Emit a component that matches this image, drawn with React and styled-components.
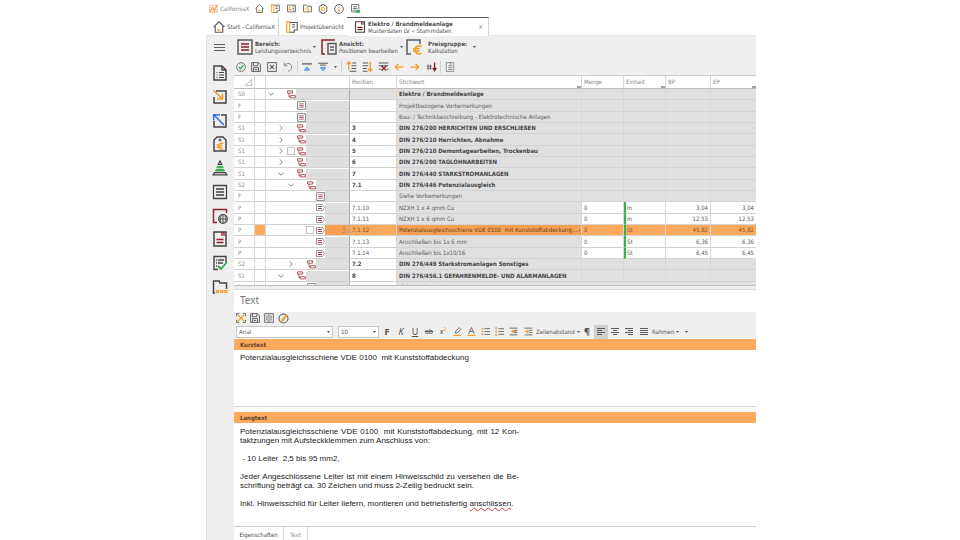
import React from "react";
import styled, { createGlobalStyle } from "styled-components";

const ORANGE = "#fea95b";
const ACCENT = "#f59a23";
const RED = "#8e1f2b";
const INK = "#5c5c5c";
const DARK = "#444";
const BAR = "#efefef";
const UI = '"DejaVu Sans Condensed", "DejaVu Sans", sans-serif';
const DOC = '"Liberation Sans", Arial, sans-serif';

const GlobalStyle = createGlobalStyle`
  *, *::before, *::after { box-sizing: border-box; }
  body { margin: 0; background: #fff; color: #4f4f4f; font: 6px/8px ${UI}; }
  button, select, textarea { font: inherit; color: inherit; margin: 0; padding: 0; border: 0; background: none; border-radius: 0; outline: none; }
  svg { display: block; flex: none; }
`;

/* ---------- layout ---------- */
const Page = styled.div`
  display: grid;
  grid-template-columns: minmax(0, 206fr) minmax(0, 550fr) minmax(0, 204fr);
  height: 100vh;
  overflow: hidden;
`;
const Window = styled.div`
  grid-column: 2;
  display: flex;
  flex-direction: column;
  min-height: 0;
`;
const TitleBar = styled.header`
  display: flex;
  align-items: center;
  height: 17px;
  padding-left: 3px;
  flex: none;
`;
const Brand = styled.span`
  display: flex;
  align-items: center;
  gap: 2px;
  width: 42px;
  color: #858585;
  white-space: nowrap;
`;
const IconButton = styled.button`
  display: grid;
  place-items: center;
  flex: none;
  width: ${(p) => p.$w || 16}px;
  height: ${(p) => p.$h || 16}px;
  background: ${(p) => (p.$active ? "#cfcfcf" : "none")};
`;
const TabBar = styled.nav`
  display: flex;
  height: 19px;
  flex: none;
  border-bottom: 1px solid #e3e3e3;
`;
const Tab = styled.button`
  display: flex;
  align-items: center;
  gap: 2px;
  flex: none;
  width: ${(p) => p.$w}px;
  padding-left: 7px !important;
  margin-bottom: ${(p) => (p.$active ? -1 : 0)}px !important;
  border-top: 1px solid ${(p) => (p.$active ? "#55585c" : "transparent")} !important;
  border-right: 1px solid ${(p) => (p.$line ? "#d4d4d4" : "transparent")} !important;
  background: ${(p) => (p.$active ? "#fff" : "none")};
  text-align: left;
  white-space: nowrap;
`;
const TwoLine = styled.span`
  display: block;
  flex: 1;
  line-height: 7px;
  text-align: left;
  white-space: nowrap;
  b { display: block; }
`;
const Close = styled.span`
  padding-right: 5px;
  color: #777;
`;
const Body = styled.div`
  display: flex;
  flex: 1;
  min-height: 0;
  background: ${BAR};
  border-left: 1px solid #e2e2e2;
`;
const Sidebar = styled.aside`
  display: flex;
  flex-direction: column;
  align-items: center;
  width: 27px;
  flex: none;
  padding: 4px 2px 0 0;
`;
const SideList = styled.div`
  display: flex;
  flex-direction: column;
  justify-content: space-between;
  height: 230px;
  margin-top: 9px;
`;
const Main = styled.main`
  display: flex;
  flex-direction: column;
  flex: 1;
  min-width: 0;
`;
const MenuRow = styled.div`
  display: flex;
  align-items: center;
  height: 22px;
  flex: none;
  padding-left: 3px;
`;
const MenuButton = styled.button`
  display: flex;
  align-items: center;
  gap: ${(p) => p.$gap || 2}px;
  width: ${(p) => p.$w}px;
  padding-right: ${(p) => p.$end || 6}px !important;
  flex: none;
`;
const ToolRow = styled.div`
  display: flex;
  align-items: center;
  height: ${(p) => p.$h || 17}px;
  flex: none;
`;
const Separator = styled.i`
  width: 1px;
  height: 12px;
  margin: 0 1px;
  background: #d0d0d0;
`;

/* ---------- table ---------- */
const TableFrame = styled.div`
  height: 211px;
  flex: none;
  overflow: hidden;
  background: #fff;
  border-top: 1px solid #c9c9c9;
  border-bottom: 1px solid #bdbdbd;
`;
const Table = styled.table`
  width: 100%;
  table-layout: fixed;
  border-collapse: separate;
  border-spacing: 0;
  line-height: 8px;
  th, td {
    padding: 0 2px;
    overflow: hidden;
    white-space: nowrap;
    text-align: left;
    border-right: 1px solid #d8d8d8;
    border-bottom: 1px solid #d2d2d2;
  }
  th:last-child, td:last-child { border-right: 0; }
`;
const Col = styled.col`
  width: ${(p) => p.$w}px;
`;
const HeadCell = styled.th`
  height: 13px;
  font-weight: 400;
  color: #858585;
  border-bottom-color: #bcbcbc !important;
  background: ${(p) =>
    p.$mark ? "linear-gradient(#a3a3a3, #a3a3a3) right bottom / 4px 2px no-repeat" : "#fff"};
`;
const Row = styled.tr`
  height: 11px;
  &:nth-child(3n + 2) { height: 12px; }
`;
const Cell = styled.td`
  background: ${(p) => p.$bg || "#fff"};
  color: ${(p) => p.$fg || "#5a5a5a"};
  font-weight: ${(p) => (p.$bold ? 700 : 400)};
  && { text-align: ${(p) => (p.$right ? "right" : "left")}; }
  ${(p) => p.$code && "&& { padding-left: 4px; color: #8b8b8b; }"}
  ${(p) => p.$unit && "&& { border-left: 2px solid #36b44a; padding-left: 1px; }"}
  ${(p) => p.$rule && "&& { border-right-color: #adadad; }"}
  ${(p) => p.$wide && "&& { padding-right: 0; }"}
  ${(p) => p.$flush && "&& { padding: 0; }"}
`;
const TreeLine = styled.div`
  display: flex;
  align-items: stretch;
  height: 10px;
`;
const TreeWhite = styled.span`
  display: flex;
  align-items: center;
  justify-content: flex-end;
  flex: none;
  width: ${(p) => p.$w}px;
  background: #fff;
`;
const TreeSlot = styled.span`
  display: grid;
  place-items: center;
  width: 10px;
`;
const TreeRest = styled.span`
  display: flex;
  flex: 1;
  align-items: center;
  justify-content: flex-end;
  padding-right: 4px;
  background: ${(p) => p.$bg};
`;
const Check = styled.input`
  appearance: none;
  width: 8px;
  height: 8px;
  margin: 0;
  border: 1px solid #c4c4c4;
  background: #fff;
`;
const Spread = styled.span`
  display: flex;
  align-items: center;
  justify-content: space-between;
  white-space: pre;
`;

/* ---------- text panel ---------- */
const Panel = styled.section`
  display: flex;
  flex-direction: column;
  flex: 1;
  min-height: 0;
  margin-top: 3px;
`;
const PanelTitle = styled.h2`
  margin: 0;
  padding: 0 0 0 6px;
  height: 23px;
  flex: none;
  border-top: 1px solid #dcdcdc;
  background: #fff;
  color: #777;
  font: 400 10px/21px "Noto Sans", sans-serif;
`;
const FormatRow = styled.div`
  display: flex;
  align-items: center;
  height: 15px;
  flex: none;
  padding-left: 2px;
  white-space: nowrap;
`;
const PickWrap = styled.label`
  display: grid;
  align-items: center;
  flex: none;
  width: ${(p) => p.$w}px;
  height: 12px;
  margin-right: ${(p) => p.$gap}px;
  border: 1px solid #c8c8c8;
  background: #fff;
  > * { grid-area: 1 / 1; }
  > svg { justify-self: end; margin-right: 2px; pointer-events: none; }
`;
const Pick = styled.select`
  appearance: none;
  width: 100%;
  padding: 0 2px !important;
`;
const Letter = styled.span`
  font: ${(p) => (p.$bold ? 700 : 400)} 9px/12px "Noto Sans", sans-serif;
  font-style: ${(p) => (p.$italic ? "italic" : "normal")};
  text-decoration: ${(p) => (p.$under ? "underline" : "none")};
`;
const Small = styled.span`
  text-decoration: ${(p) => (p.$strike ? "line-through" : "none")};
  font: 7px/10px "Noto Sans", sans-serif;
  sup { color: ${ACCENT}; font-size: 5px; line-height: 0; }
`;
const DropButton = styled.button`
  display: flex;
  align-items: center;
  gap: 2px;
  width: ${(p) => p.$w}px;
  flex: none;
`;
const BlockBar = styled.h3`
  margin: 0;
  height: 11px;
  flex: none;
  padding-left: 6px;
  background: ${ORANGE};
  font: 700 6px/11px ${UI};
  color: #5a4130;
`;
const ShortText = styled.textarea`
  display: block;
  height: 57px;
  flex: none;
  resize: none;
  padding: 3px 6px !important;
  background: #fff !important;
  color: #222 !important;
  border-bottom: 1px solid #d6d6d6 !important;
  font: 8px/9px ${DOC} !important;
`;
const LongText = styled.div`
  flex: 1;
  min-height: 0;
  padding: 4px 6px;
  overflow: hidden;
  background: #fff;
  color: #222;
  font: 8px/9px ${DOC};
  outline: none;
`;
const Paragraph = styled.p`
  width: 279px;
  margin: 0 0 9px;
  white-space: nowrap;
`;
const FullLine = styled.span`
  display: block;
  white-space: normal;
  text-align: justify;
  text-align-last: justify;
`;
const Misspelt = styled.span`
  text-decoration-line: underline;
  text-decoration-style: wavy;
  text-decoration-color: #d23a3a;
  text-decoration-thickness: 1px;
`;
const Gap = styled.div`
  height: 5px;
  flex: none;
  background: #fafafa;
`;
const BottomTabs = styled.nav`
  display: flex;
  height: 14px;
  flex: none;
  background: #fff;
  border-top: 1px solid #cfcfcf;
`;
const BottomTab = styled.button`
  width: ${(p) => p.$w}px;
  padding-top: 2px !important;
  border-right: 1px solid #d6d6d6 !important;
  color: ${(p) => (p.$muted ? "#8f8f8f" : "#4a4a4a")} !important;
`;

/* ---------- icons ---------- */
const Svg = ({ s = 16, w, h, box = "0 0 16 16", c = INK, sw = 1.5, children }) => (
  <svg width={w || s} height={h || s} viewBox={box} fill="none" stroke={c} strokeWidth={sw} aria-hidden="true">
    {children}
  </svg>
);
const Caret = () => (
  <svg width="3" height="2" viewBox="0 0 6 4" aria-hidden="true"><path d="M0 0h6L3 4z" fill="#555" /></svg>
);
const Logo = () => (
  <Svg s={9}>
    <path d="M1 2h14v13H1z" stroke="#f3a672" fill="#fdebd6" strokeWidth="1" />
    <path d="m2 15 4-9 3 5 6-9M9 15l2-4" stroke="#ee7d20" />
  </Svg>
);
const House = ({ s = 9 }) => (
  <Svg s={s}>
    <path d="M1 8 8 1l7 7M3 7v8h10V7" />
    <path d="M6 12h4" stroke={ACCENT} strokeWidth="2" />
  </Svg>
);
const Project = ({ s = 9 }) => (
  <Svg s={s}>
    <path d="M5 1H1v14h4z" stroke={ACCENT} />
    <path d="M5 2h10v10h-4v3H5M8 5h4M8 8h4" />
  </Svg>
);
const Contacts = () => (
  <Svg s={9}>
    <path d="M1 2h14v12H1z" /><path d="M5 5v3M3 10h5" stroke={ACCENT} strokeWidth="2.5" /><path d="M10 5h3M10 8h3M10 11h3" />
  </Svg>
);
const Folder = () => (
  <Svg s={9}>
    <path d="M1 14V2h5l2 2h7v10z" /><circle cx="7" cy="8" r="2" stroke={ACCENT} /><path d="m8 10 4 3" stroke={ACCENT} strokeWidth="2" />
  </Svg>
);
const Gear = () => (
  <Svg s={10}>
    <path d="M6 1h4l.6 2.2 2.2-.6 2 3.4L13.300 8l1.500 2-2 3.400-2.200-.6L10 15H6l-.6-2.200-2.200.6-2-3.400L2.700 8 1.200 6l2-3.400 2.200.6z" />
    <circle cx="8" cy="8" r="2.500" stroke={ACCENT} />
  </Svg>
);
const Info = () => (
  <Svg s={10}><circle cx="8" cy="8" r="7" /><path d="M8 7v5M8 4v1.500" stroke={ACCENT} strokeWidth="2" /></Svg>
);
const Status = () => (
  <Svg s={9}><path d="M14 9V1H1v13h8M4 5h7M4 8h7M4 11h4" /><path d="M10 11h5v4h-5z" fill="#2ea84a" stroke="#2ea84a" /></Svg>
);
const BookIcon = ({ s = 11 }) => (
  <Svg s={s} c={DARK}><path d="M2 1h12v14H2z" /><path d="M4.500 8.500h7M4.500 11.500h7" stroke={RED} /><path d="M10 1v4M12 1v4" stroke={RED} strokeWidth="1.300" /></Svg>
);
const Bereich = () => (
  <Svg s={16}><path d="M1 1h14v14H1z" /><path d="M4 5h8M4 8h8M4 11h8" stroke={RED} /></Svg>
);
const Ansicht = () => (
  <Svg s={16}><path d="M14 1H1v14h3" stroke={RED} /><path d="M7 4.500h8V15H7zM9 8h4M9 11h4" /></Svg>
);
const Euro = () => (
  <Svg s={16}><path d="M14 5V1H1v14h4" /><path d="M15.500 7.500c-3-1.500-6.500-.5-6.500 3.300s3.500 5 6.500 3.500M7 9.700h6.500M7 12h6.500" stroke={ACCENT} strokeWidth="1.600" /></Svg>
);
const Burger = () => (
  <Svg w={11} h={8} box="0 0 11 8" sw={1}><path d="M0 .5h11M0 3.500h11M0 6.500h11" /></Svg>
);
const Ok = () => (
  <Svg s={10} sw={1.300}><circle cx="8" cy="8" r="7" /><path d="m4.500 8 2.500 3 5-6" stroke="#2ea84a" strokeWidth="2" /></Svg>
);
const Save = ({ s = 10 }) => (
  <Svg s={s}><path d="M1 1h11l3 3v11H1zM4 1v5h7V1M4 15V9h8v6M6 12h4" /></Svg>
);
const Cancel = () => (
  <Svg s={10}><path d="M1 1h14v14H1z" /><path d="m5 5 6 6M11 5l-6 6" strokeWidth="2" /></Svg>
);
const Undo = () => (
  <Svg s={10} c="#8a8a8a"><path d="M2 1v5h5M2 6c4-6 12-4 12 2 0 4-3 6-6 7" strokeWidth="1.600" /></Svg>
);
const ToTop = () => (
  <Svg s={10}><path d="M0 3h16" strokeWidth="2" /><path d="m8 8 4 5H4z" fill="#9cc3f7" stroke="#3d84e6" /></Svg>
);
const ToBottom = () => (
  <Svg s={10}><path d="M0 2h16M3 5h10" strokeWidth="1.600" /><path d="m8 14 4-5H4z" fill="#9cc3f7" stroke="#3d84e6" /></Svg>
);
const MoveUp = () => (
  <Svg s={11}><path d="M4 13V2M1 5l3-4 3 4" stroke={ACCENT} strokeWidth="1.800" /><path d="M9 3h6M8 7h7M8 11h7M5 15h10" /></Svg>
);
const MoveDown = () => (
  <Svg s={11}><path d="M12 1v13M9 11l3 4 3-4" stroke={ACCENT} strokeWidth="2" /><path d="M1 3h8M1 7h8M1 11h6M1 15h7" /></Svg>
);
const Remove = () => (
  <Svg s={11}><path d="M1 3h14M1 7h14M1 12h3M13 12h2" /><path d="m5 7 7 7M12 7l-7 7" stroke={RED} strokeWidth="2" /></Svg>
);
const Arrow = ({ right }) => (
  <Svg s={10} c={ACCENT} sw={2}>{right ? <path d="M1 8h13M9 3l5 5-5 5" /> : <path d="M15 8H2M7 3 2 8l5 5" />}</Svg>
);
const Renumber = () => (
  <Svg s={11}><path d="M3 5v8M6.500 5v8M1 7.500h7.500M1 10.500h7.500" strokeWidth="1.200" /><path d="M12.500 2v11M10 10l2.500 4 2.500-4" stroke={RED} strokeWidth="2" /></Svg>
);
const Sheet = () => (
  <Svg s={10} c="#8b8b8b"><path d="M2 1h12v14H2zM5 6h7M5 9h7M5 12h7M9 1v4" /></Svg>
);
const SideDoc = () => (
  <Svg c={DARK}><path d="M14 15H2V1h8l4 4zM10 1v4h4" /><path d="M4.500 7.500h1M7 7.500h5M4.500 10h1M7 10h5M4.500 12.500h1M7 12.500h5" strokeWidth="1.200" /></Svg>
);
const SideIn = () => (
  <Svg c={DARK}><path d="M4 2h10v12H2V8" /><path d="m1.500 1.500 9 8.500M10.500 4.500V10H5" stroke={ACCENT} /></Svg>
);
const SideOut = () => (
  <Svg c={DARK}><path d="M9 2h5v12H2V8" /><path d="m12 12L2 2M1.700 7.500V1.700H8" stroke="#2c6fe0" /></Svg>
);
const SideTag = () => (
  <Svg c={DARK}><path d="M2 15V4l3-3h6l3 3v11z" /><circle cx="8" cy="4" r="1" strokeWidth="1" /><path d="M11.500 7.500c-3-1-5 0-5 2.500s2 4 5 3M4.500 9.200H10M4.500 11.200H10" stroke={ACCENT} strokeWidth="1.200" /></Svg>
);
const SidePyramid = () => (
  <Svg c={DARK} sw={1.200}>
    <path d="m8 1 1.800 3.500H6.200z" />
    <path d="M5.500 6.200h5l.8 1.600H4.700zM4.200 9.400h7.600l.8 1.600H3.400z" fill="#2ea84a" stroke="#2ea84a" strokeWidth=".8" />
    <path d="M2.400 12.600h11.200l1.400 2.300H1z" />
  </Svg>
);
const SideText = () => (
  <Svg c={DARK}><path d="M1.500 1.500h13v13h-13zM4 5h8M4 8h8M4 11h8" strokeWidth="1.300" /></Svg>
);
const SideGlobe = () => (
  <Svg c={DARK}><path d="M14.500 5V1.500h-13v13H5" stroke={RED} /><circle cx="11" cy="11" r="4.300" strokeWidth="1.200" /><path d="M7 11h8M11 7v8M9 8c-1 2-1 4 0 6M13 8c1 2 1 4 0 6" strokeWidth=".9" /></Svg>
);
const SideCheck = () => (
  <Svg c={DARK}><path d="M14 7V1.500H2v13h4M4 5h1M6 5h6M4 8h1M6 8h5M4 11h1" strokeWidth="1.400" /><path d="m6 11 3 3 6-7" stroke="#2ea84a" strokeWidth="1.800" /></Svg>
);
const SideFolder = () => (
  <Svg c={DARK}><path d="M3 14H1.500V2H7l1 2h6.500v6" /><path d="M4.500 11.500h2v2h-2zM8.700 11.500h2v2h-2zM13 11.500h2v2h-2z" stroke={ACCENT} strokeWidth="1.200" /></Svg>
);
const Chevron = ({ open }) => (
  <Svg s={6} sw={2}>{open ? <path d="m1 5 7 6 7-6" /> : <path d="m5 1 6 7-6 7" />}</Svg>
);
const Group = () => (
  <Svg s={9} c="#a5444c" sw={1.600}><path d="M1 1.500h9v4H1zM6 10h9v4H6zM3.500 6v6H6" /></Svg>
);
const Note = () => (
  <Svg s={9} c="#777"><path d="M1 1h14v14H1z" /><path d="M4 5h8M4 8h8M4 11h8" stroke="#a5444c" /></Svg>
);
const Item = () => (
  <Svg w={9} h={7} box="0 0 18 14" c="#777"><path d="M1 1h12l4 6-4 6H1z" /><path d="M4 5h8M4 9h8" stroke="#a5444c" strokeWidth="2" /></Svg>
);
const Dots = () => (
  <svg width="5" height="1" viewBox="0 0 5 1" fill="#6b4a28" aria-hidden="true"><path d="M0 0h1v1H0zM2 0h1v1H2zM4 0h1v1H4z" /></svg>
);
const Expand = () => (
  <Svg s={10}><path d="m3 3 10 10M13 3 3 13" stroke={ACCENT} strokeWidth="2" /><path d="M1 5V1h4M11 1h4v4M15 11v4h-4M5 15H1v-4" /></Svg>
);
const Columns = () => (
  <Svg s={10}><path d="M1 1h14v14H1zM8 1v14M3 5h3M3 8h3M3 11h3M10 5h3M10 8h3M10 11h3" strokeWidth="1.300" /></Svg>
);
const Edit = () => (
  <Svg s={11}><circle cx="8" cy="8" r="6.500" /><path d="m5 12 8-9" stroke={ACCENT} strokeWidth="3" /></Svg>
);
const Marker = () => (
  <Svg s={9}><path d="M1 15h13" stroke={ACCENT} strokeWidth="2" /><path d="m4 11 1-4 6-6 3 3-6 6z" /></Svg>
);
const TextColor = () => (
  <Svg s={9}><path d="M1 15h14" stroke={ACCENT} strokeWidth="2" /><path d="m3 12 5-11 5 11M5 8h6" /></Svg>
);
const Bullets = ({ numbered }) => (
  <Svg s={9}><path d={numbered ? "M2 0v16" : "M1 3h3M1 8h3M1 13h3"} stroke={ACCENT} strokeWidth="2.500" strokeDasharray={numbered ? "4 2" : undefined} /><path d="M6 3h10M6 8h10M6 13h10" /></Svg>
);
const Indent = ({ out }) => (
  <Svg s={9}><path d="M1 2h14M9 6h6M9 10h6M1 14h14" /><path d={out ? "M1 8h7M5 5l3 3-3 3" : "M13 8H5M8 5 5 8l3 3"} stroke={ACCENT} strokeWidth="2" /></Svg>
);
const Align = ({ d }) => (
  <Svg w={8} h={8} box="0 0 8 8" sw={1}><path d={d} /></Svg>
);
const Corner = () => (
  <Svg s={7} c="#999"><path d="M15 1v14H1z" /></Svg>
);

/* ---------- data ---------- */
const GREY = "#e0e0e0";
const ROWS = [
  { code: "S0", level: 0, open: true, kind: "group", text: "Elektro / Brandmeldeanlage", root: true },
  { code: "F", level: 1, kind: "note", text: "Projektbezogene Vorbemerkungen" },
  { code: "F", level: 1, kind: "note", text: "Bau- / Technikbeschreibung - Elektrotechnische Anlagen" },
  { code: "S1", level: 1, open: false, kind: "group", pos: "3", text: "DIN 276/200 HERRICHTEN UND ERSCHLIEßEN" },
  { code: "S1", level: 1, open: false, kind: "group", pos: "4", text: "DIN 276/210 Herrichten, Abnahme" },
  { code: "S1", level: 1, open: false, kind: "group", pos: "5", text: "DIN 276/210 Demontagearbeiten, Trockenbau", check: true },
  { code: "S1", level: 1, open: false, kind: "group", pos: "6", text: "DIN 276/200 TAGLOHNARBEITEN" },
  { code: "S1", level: 1, open: true, kind: "group", pos: "7", text: "DIN 276/440 STARKSTROMANLAGEN" },
  { code: "S2", level: 2, open: true, kind: "group", pos: "7.1", text: "DIN 276/446 Potenzialausgleich" },
  { code: "F", level: 3, kind: "note", text: "Siehe Vorbemerkungen" },
  { code: "P", level: 3, kind: "item", pos: "7.1.10", text: "NZXH 1 x 4 qmm Cu", unit: "m", price: "3,04" },
  { code: "P", level: 3, kind: "item", pos: "7.1.11", text: "NZXH 1 x 6 qmm Cu", unit: "m", price: "12,53" },
  { code: "P", level: 3, kind: "item", pos: "7.1.12", text: "Potenzialausgleichsschiene VDE 0100  mit Kunststoffabdeckung,…", unit: "St", price: "45,82", check: true, active: true },
  { code: "P", level: 3, kind: "item", pos: "7.1.13", text: "Anschließen bis 1x 6 mm", unit: "St", price: "6,36" },
  { code: "P", level: 3, kind: "item", pos: "7.1.14", text: "Anschließen bis 1x10/16", unit: "St", price: "6,45" },
  { code: "S2", level: 2, open: false, kind: "group", pos: "7.2", text: "DIN 276/449 Starkstromanlagen Sonstiges" },
  { code: "S1", level: 1, open: true, kind: "group", pos: "8", text: "DIN 276/456.1 GEFAHRENMELDE- UND ALARMANLAGEN" },
  { code: "F", level: 2, kind: "note", text: "siehe Vorbemerkungen" },
];
const HEADS = [
  { w: 21, icon: true }, { w: 11 }, { w: 84 }, { w: 47, label: "Position" }, { label: "Stichwort", mark: true },
  { w: 42, label: "Menge" }, { w: 42, label: "Einheit", mark: true }, { w: 45, label: "BP" }, { w: 45, label: "EP", mark: true },
];
const KIND = { group: <Group />, note: <Note />, item: <Item /> };

function TableRow({ row }) {
  const bold = row.kind === "group";
  const hot = row.active;
  const priced = row.kind === "item";
  const value = hot ? ORANGE : priced ? "#fff" : GREY;
  const fg = hot ? "#7c5023" : undefined;
  return (
    <Row>
      <Cell $code>{row.code}</Cell>
      <Cell $bg={hot ? ORANGE : undefined} />
      <Cell $flush $rule>
        <TreeLine>
          <TreeWhite $w={30 + row.level * 10 - (row.level === 3 ? 1 : 0)}>
            {row.open !== undefined && <TreeSlot><Chevron open={row.open} /></TreeSlot>}
            <TreeSlot>{row.check && <Check type="checkbox" aria-label={row.text} />}</TreeSlot>
            <TreeSlot>{KIND[row.kind]}</TreeSlot>
          </TreeWhite>
          <TreeRest $bg={hot ? "#f5a053" : "#dedede"}>
            {hot && <Svg w={2} h={8} box="0 0 2 8" sw={1}><path d="M1 1v1M1 3.500v1M1 6v1" /></Svg>}
          </TreeRest>
        </TreeLine>
      </Cell>
      <Cell $bold={bold} $bg={hot ? ORANGE : row.root ? GREY : undefined} $fg={fg || (bold ? "#444" : undefined)}>{row.pos}</Cell>
      <Cell $wide $bold={bold} $bg={hot ? "#f5a053" : GREY} $fg={hot ? "#5f4326" : bold ? "#444" : undefined}>
        <Spread><span>{row.text}</span>{hot && <Dots />}</Spread>
      </Cell>
      <Cell $bg={value} $fg={fg}>{priced && "0"}</Cell>
      <Cell $bg={value} $fg={fg} $unit={priced}>{row.unit}</Cell>
      <Cell $bg={value} $fg={fg} $right>{row.price}</Cell>
      <Cell $bg={value} $fg={fg} $right>{row.price}</Cell>
    </Row>
  );
}

const Btn = ({ label, children, ...rest }) => (
  <IconButton type="button" aria-label={label} {...rest}>{children}</IconButton>
);

const TITLE_TOOLS = [["Start", House], ["Projekte", Project], ["Adressen", Contacts], ["Suchen", Folder], ["Einstellungen", Gear], ["Info", Info], ["Status", Status]];
const SIDE_TOOLS = [["Dokument", SideDoc], ["Import", SideIn], ["Export", SideOut], ["Preise", SideTag], ["Struktur", SidePyramid], ["Texte", SideText], ["Web", SideGlobe], ["Katalog", () => <BookIcon s={16} />], ["Prüfen", SideCheck], ["Ordner", SideFolder]];

export default function App() {
  return (
    <Page>
      <GlobalStyle />
      <Window>
        <TitleBar>
          <Brand><Logo />CaliforniaX</Brand>
          {TITLE_TOOLS.map(([label, Icon]) => <Btn key={label} label={label}><Icon /></Btn>)}
        </TitleBar>
        <TabBar>
          <Tab $w={73} $line><House s={12} />Start - CaliforniaX</Tab>
          <Tab $w={68}><Project s={12} />Projektübersicht</Tab>
          <Tab $w={142} $active $line>
            <BookIcon s={12} />
            <TwoLine><b>Elektro / Brandmeldeanlage</b>Musterdaten LV « Stammdaten</TwoLine>
            <Close>×</Close>
          </Tab>
        </TabBar>
        <Body>
          <Sidebar>
            <Btn label="Menü"><Burger /></Btn>
            <SideList>
              {SIDE_TOOLS.map(([label, Icon]) => <Btn key={label} label={label}><Icon /></Btn>)}
            </SideList>
          </Sidebar>
          <Main>
            <MenuRow>
              <MenuButton $w={84} $end={6}><Bereich /><TwoLine><b>Bereich:</b>Leistungsverzeichnis</TwoLine><Caret /></MenuButton>
              <MenuButton $w={85} $end={6}><Ansicht /><TwoLine><b>Ansicht:</b>Positionen bearbeiten</TwoLine><Caret /></MenuButton>
              <MenuButton $w={66} $gap={6} $end={1}><Euro /><TwoLine><b>Preisgruppe:</b>Kalkulation</TwoLine><Caret /></MenuButton>
            </MenuRow>
            <ToolRow>
              <Btn label="Übernehmen" $w={14}><Ok /></Btn>
              <Btn label="Speichern"><Save /></Btn>
              <Btn label="Abbrechen"><Cancel /></Btn>
              <Btn label="Rückgängig"><Undo /></Btn>
              <Separator />
              <Btn label="Zum Anfang"><ToTop /></Btn>
              <Btn label="Zum Ende"><ToBottom /></Btn>
              <Btn label="Mehr" $w={9}><Caret /></Btn>
              <Separator />
              <Btn label="Nach oben"><MoveUp /></Btn>
              <Btn label="Nach unten"><MoveDown /></Btn>
              <Btn label="Löschen"><Remove /></Btn>
              <Btn label="Links"><Arrow /></Btn>
              <Btn label="Rechts"><Arrow right /></Btn>
              <Btn label="Neu nummerieren"><Renumber /></Btn>
              <Separator />
              <Btn label="Blatt"><Sheet /></Btn>
            </ToolRow>
            <TableFrame>
              <Table>
                <colgroup>{HEADS.map((h, i) => <Col key={i} $w={h.w} />)}</colgroup>
                <thead>
                  <tr>{HEADS.map((h, i) => <HeadCell key={i} $mark={h.mark}>{h.icon ? <Spread><span /><Corner /></Spread> : h.label}</HeadCell>)}</tr>
                </thead>
                <tbody>{ROWS.map((row, i) => <TableRow key={i} row={row} />)}</tbody>
              </Table>
            </TableFrame>
            <Panel>
              <PanelTitle>Text</PanelTitle>
              <ToolRow $h={12}>
                <Btn label="Maximieren" $w={14} $h={12}><Expand /></Btn>
                <Btn label="Text speichern" $w={14} $h={12}><Save /></Btn>
                <Btn label="Spalten" $w={14} $h={12}><Columns /></Btn>
                <Btn label="Bearbeiten" $w={14} $h={12}><Edit /></Btn>
              </ToolRow>
              <FormatRow>
                <PickWrap $w={97} $gap={5}><Pick aria-label="Schriftart"><option>Arial</option></Pick><Caret /></PickWrap>
                <PickWrap $w={41} $gap={1}><Pick aria-label="Schriftgröße"><option>10</option></Pick><Caret /></PickWrap>
                <Btn label="Fett" $w={14} $h={12}><Letter $bold>F</Letter></Btn>
                <Btn label="Kursiv" $w={14} $h={12}><Letter $italic>K</Letter></Btn>
                <Btn label="Unterstrichen" $w={14} $h={12}><Letter $under>U</Letter></Btn>
                <Btn label="Durchgestrichen" $w={14} $h={12}><Small $strike>ab</Small></Btn>
                <Btn label="Hochgestellt" $w={14} $h={12}><Small>x<sup>2</sup></Small></Btn>
                <Btn label="Hervorheben" $w={14} $h={12}><Marker /></Btn>
                <Btn label="Textfarbe" $w={14} $h={12}><TextColor /></Btn>
                <Btn label="Aufzählung" $w={14} $h={12}><Bullets /></Btn>
                <Btn label="Nummerierung" $w={14} $h={12}><Bullets numbered /></Btn>
                <Btn label="Einzug verkleinern" $w={14} $h={12}><Indent /></Btn>
                <Btn label="Einzug vergrößern" $w={16} $h={12}><Indent out /></Btn>
                <DropButton $w={44}>Zeilenabstand<Caret /></DropButton>
                <Btn label="Absatzmarken" $w={14} $h={12}><Letter $bold>¶</Letter></Btn>
                <Btn label="Linksbündig" $w={14} $h={14} $active><Align d="M0 .5h8M0 2.500h5M0 4.500h8M0 6.500h5" /></Btn>
                <Btn label="Zentriert" $w={14} $h={12}><Align d="M0 .5h8M2 2.500h4M0 4.500h8M2 6.500h4" /></Btn>
                <Btn label="Rechtsbündig" $w={14} $h={12}><Align d="M0 .5h8M3 2.500h5M0 4.500h8M3 6.500h5" /></Btn>
                <Btn label="Blocksatz" $w={16} $h={12}><Align d="M0 .5h8M0 2.500h8M0 4.500h8M0 6.500h8" /></Btn>
                <DropButton $w={30}>Rahmen<Caret /></DropButton>
                <Btn label="Weitere" $w={8} $h={12}><Caret /></Btn>
              </FormatRow>
              <BlockBar id="kurz">Kurztext</BlockBar>
              <ShortText aria-labelledby="kurz" spellCheck={false} defaultValue={"Potenzialausgleichsschiene VDE 0100  mit Kunststoffabdeckung"} />
              <Gap />
              <BlockBar id="lang">Langtext</BlockBar>
              <LongText role="textbox" aria-multiline="true" aria-labelledby="lang" contentEditable suppressContentEditableWarning spellCheck={false}>
                <Paragraph>
                  <FullLine>Potenzialausgleichsschiene VDE 0100 &nbsp;mit Kunststoffabdeckung, mit 12 Kon-</FullLine>
                  taktzungen mit Aufsteckklemmen zum Anschluss von:
                </Paragraph>
                <Paragraph>&nbsp;- 10 Leiter &nbsp;2,5 bis 95 mm2,</Paragraph>
                <Paragraph>
                  <FullLine>Jeder Angeschlossene Leiter ist mit einem Hinweisschild zu versehen die Be-</FullLine>
                  schriftung beträgt ca. 30 Zeichen und muss 2-Zeilig bedruckt sein.
                </Paragraph>
                <Paragraph>Inkl. Hinweisschild für Leiter liefern, montieren und betriebsfertig <Misspelt>anschlissen</Misspelt>.</Paragraph>
              </LongText>
              <BottomTabs>
                <BottomTab $w={50}>Eigenschaften</BottomTab>
                <BottomTab $w={24} $muted>Text</BottomTab>
              </BottomTabs>
            </Panel>
          </Main>
        </Body>
      </Window>
    </Page>
  );
}
